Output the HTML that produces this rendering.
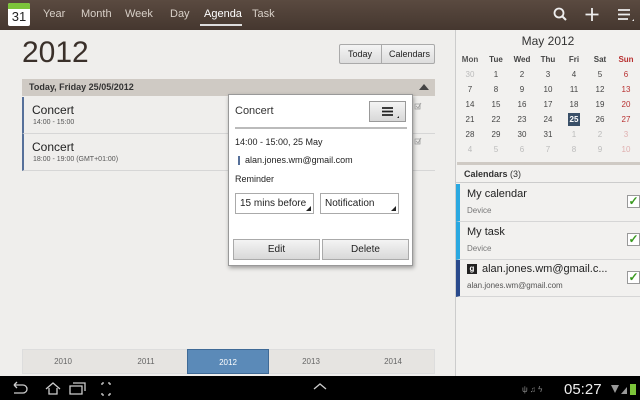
<!DOCTYPE html>
<html><head><style>
*{margin:0;padding:0;box-sizing:border-box}
body{width:640px;height:400px;overflow:hidden;background:#efeeec;font-family:"Liberation Sans",sans-serif;position:relative;color:#222}
.a{position:absolute}
.top{left:0;top:0;width:640px;height:30px;background:linear-gradient(#5a4a40,#45372f)}
.tab{top:8px;font-size:11px;color:#d8d0c8}
.cal td{width:26px;text-align:center;font-size:8px;height:15px;color:#444}
.g{color:#bbb!important}.r{color:#b83030!important}.rg{color:#e0b0b0!important}
.chk{width:13px;height:13px;border:1px solid #999;background:#fff;color:#3a9a20;font-size:12px;line-height:11px;text-align:center;font-weight:bold}
.yr{top:349px;height:25px;width:82px;text-align:center;font-size:8px;color:#666;line-height:25px}
</style></head><body>
<div class="a top"></div>
<div class="a" style="left:8px;top:3px;width:22px;height:23px;background:#fff;border-radius:2px;overflow:hidden"><div style="height:6px;background:#7cc43a"></div><div style="font-size:13px;text-align:center;line-height:16px;color:#222">31</div></div>
<div class="a tab" style="left:43px">Year</div>
<div class="a tab" style="left:81px">Month</div>
<div class="a tab" style="left:125px">Week</div>
<div class="a tab" style="left:170px">Day</div>
<div class="a tab" style="left:204px;color:#fff">Agenda</div>
<div class="a" style="left:200px;top:24px;width:42px;height:2px;background:#ddd"></div>
<div class="a tab" style="left:252px">Task</div>
<svg class="a" style="left:552px;top:6px" width="84" height="18" viewBox="0 0 84 18"><circle cx="7" cy="7" r="4.5" fill="none" stroke="#eee" stroke-width="1.8"/><path d="M10 10l4 4" stroke="#eee" stroke-width="2"/><path d="M40 2v13M33.5 8.5h13" stroke="#eee" stroke-width="1.8"/><path d="M66 4h12M66 8.5h12M66 13h10" stroke="#eee" stroke-width="1.8"/><path d="M80 15l2-2v2z" fill="#eee"/></svg>

<div class="a" style="left:22px;top:36px;font-size:30px;color:#3a302a">2012</div>
<div class="a" style="left:339px;top:44px;width:96px;height:20px;border:1px solid #aaa;border-radius:2px;background:linear-gradient(#f4f4f4,#ddd);font-size:9px;line-height:18px"><span style="position:absolute;left:8px">Today</span><span style="position:absolute;left:41px;top:0;height:18px;border-left:1px solid #aaa;padding-left:7px">Calendars</span></div>
<div class="a" style="left:22px;top:79px;width:413px;height:17px;background:#cfcac4;font-size:9px;font-weight:bold;line-height:17px;padding-left:7px;color:#333">Today, Friday 25/05/2012</div>
<div class="a" style="left:419px;top:84px;border-left:5px solid transparent;border-right:5px solid transparent;border-bottom:6px solid #444"></div>
<div class="a" style="left:22px;top:97px;width:413px;height:37px;border-left:2px solid #56709a;border-bottom:1px solid #d6d6d6"><div style="position:absolute;left:8px;top:6px;font-size:12px">Concert</div><div style="position:absolute;left:9px;top:22px;font-size:7px;color:#555">14:00 - 15:00</div></div>
<div class="a" style="left:22px;top:134px;width:413px;height:37px;border-left:2px solid #56709a;border-bottom:1px solid #d6d6d6"><div style="position:absolute;left:8px;top:6px;font-size:12px">Concert</div><div style="position:absolute;left:9px;top:22px;font-size:7px;color:#555">18:00 - 19:00 (GMT+01:00)</div></div>

<div class="a" style="left:228px;top:94px;width:185px;height:172px;background:#fff;border:1px solid #999;box-shadow:1px 2px 4px rgba(0,0,0,.35)">
<div class="a" style="left:6px;top:10px;font-size:11px;color:#333">Concert</div>
<div class="a" style="left:140px;top:6px;width:37px;height:21px;border:1px solid #999;background:linear-gradient(#f4f4f4,#d8d8d8)"><svg width="35" height="19"><path d="M12 6h11M12 9.5h11M12 13h11" stroke="#222" stroke-width="1.8"/><path d="M27 16l2-2v2z" fill="#222"/></svg></div>
<div class="a" style="left:6px;top:32px;width:172px;height:2px;background:#bbb"></div>
<div class="a" style="left:6px;top:42px;font-size:9px">14:00 - 15:00, 25 May</div>
<div class="a" style="left:9px;top:61px;width:2px;height:9px;background:#56709a"></div>
<div class="a" style="left:16px;top:60px;font-size:9px">alan.jones.wm@gmail.com</div>
<div class="a" style="left:6px;top:79px;font-size:9px">Reminder</div>
<div class="a" style="left:6px;top:98px;width:79px;height:21px;border:1px solid #aaa;font-size:10px;line-height:19px;padding-left:4px">15 mins before<span style="position:absolute;right:2px;bottom:2px;border-left:5px solid transparent;border-bottom:5px solid #222"></span></div>
<div class="a" style="left:91px;top:98px;width:79px;height:21px;border:1px solid #aaa;font-size:10px;line-height:19px;padding-left:4px">Notification<span style="position:absolute;right:2px;bottom:2px;border-left:5px solid transparent;border-bottom:5px solid #222"></span></div>
<div class="a" style="left:4px;top:144px;width:87px;height:21px;border:1px solid #aaa;background:linear-gradient(#f4f4f4,#d8d8d8);font-size:10px;text-align:center;line-height:19px">Edit</div>
<div class="a" style="left:93px;top:144px;width:87px;height:21px;border:1px solid #aaa;background:linear-gradient(#f4f4f4,#d8d8d8);font-size:10px;text-align:center;line-height:19px">Delete</div>
</div>
<svg class="a" style="left:413px;top:101px" width="10" height="50"><path d="M2 3h5v5h-5zM3 5l2 2 3-5M2 38h5v5h-5zM3 40l2 2 3-5" fill="none" stroke="#999" stroke-width="0.8"/></svg>

<div class="a" style="left:22px;top:349px;width:413px;height:25px;background:#e6e4e1;border:1px solid #ddd"></div>
<div class="a yr" style="left:22px">2010</div>
<div class="a yr" style="left:105px">2011</div>
<div class="a yr" style="left:187px;background:#5b8ab8;color:#fff;border:1px solid #3f6a96">2012</div>
<div class="a yr" style="left:270px">2013</div>
<div class="a yr" style="left:352px">2014</div>

<div class="a" style="left:455px;top:30px;width:1px;height:346px;background:#ccc"></div>
<div class="a" style="left:456px;top:30px;width:184px;height:346px;background:#f2f1ef"></div>
<div class="a" style="left:456px;top:34px;width:184px;text-align:center;font-size:12px;color:#333">May 2012</div>
<table class="a cal" style="left:457px;top:52px;border-collapse:collapse">
<tr style="font-weight:bold"><td style="color:#555">Mon</td><td>Tue</td><td>Wed</td><td>Thu</td><td>Fri</td><td>Sat</td><td class="r">Sun</td></tr>
<tr><td class="g">30</td><td>1</td><td>2</td><td>3</td><td>4</td><td>5</td><td class="r">6</td></tr>
<tr><td>7</td><td>8</td><td>9</td><td>10</td><td>11</td><td>12</td><td class="r">13</td></tr>
<tr><td>14</td><td>15</td><td>16</td><td>17</td><td>18</td><td>19</td><td class="r">20</td></tr>
<tr><td>21</td><td>22</td><td>23</td><td>24</td><td><span style="background:#3a5068;color:#fff;padding:2px 2px;font-weight:bold">25</span></td><td>26</td><td class="r">27</td></tr>
<tr><td>28</td><td>29</td><td>30</td><td>31</td><td class="g">1</td><td class="g">2</td><td class="rg">3</td></tr>
<tr><td class="g">4</td><td class="g">5</td><td class="g">6</td><td class="g">7</td><td class="g">8</td><td class="g">9</td><td class="rg">10</td></tr>
</table>
<div class="a" style="left:457px;top:162px;width:183px;height:3px;background:#cfcac4"></div>
<div class="a" style="left:456px;top:165px;width:184px;height:18px;font-size:9px;font-weight:bold;line-height:18px;padding-left:8px;color:#333;border-bottom:1px solid #ccc">Calendars <span style="font-weight:normal">(3)</span></div>
<div class="a" style="left:456px;top:184px;width:184px;height:38px;border-left:4px solid #2aa8e0;border-bottom:1px solid #d6d6d6"><div class="a" style="left:7px;top:4px;font-size:11px">My calendar</div><div class="a" style="left:7px;top:22px;font-size:8px;color:#777">Device</div><div class="a chk" style="left:167px;top:11px">✓</div></div>
<div class="a" style="left:456px;top:222px;width:184px;height:38px;border-left:4px solid #2aa8e0;border-bottom:1px solid #d6d6d6"><div class="a" style="left:7px;top:4px;font-size:11px">My task</div><div class="a" style="left:7px;top:22px;font-size:8px;color:#777">Device</div><div class="a chk" style="left:167px;top:11px">✓</div></div>
<div class="a" style="left:456px;top:260px;width:184px;height:37px;border-left:4px solid #2a4a8c;border-bottom:1px solid #d6d6d6"><div class="a" style="left:7px;top:4px;width:10px;height:10px;background:#222;color:#fff;font-size:8px;text-align:center;line-height:10px;font-weight:bold">g</div><div class="a" style="left:22px;top:3px;font-size:11px">alan.jones.wm@gmail.c...</div><div class="a" style="left:7px;top:21px;font-size:8px;color:#555">alan.jones.wm@gmail.com</div><div class="a chk" style="left:167px;top:11px">✓</div></div>

<div class="a" style="left:0;top:376px;width:640px;height:24px;background:#000"></div>
<svg class="a" style="left:0;top:376px" width="640" height="24"><g fill="none" stroke="#ccc" stroke-width="1.3"><path d="M14 9h9a4 4 0 010 8h-9M14 9l3-3M14 9l3 3"/><path d="M46 13l7-6 7 6M49 12v6h8v-6"/><path d="M70 10h12v8h-12zM73 7h12v8"/><path d="M102 7h2M102 7v2M110 7h-2M110 7v2M102 19h2M102 19v-2M110 19h-2M110 19v-2"/><path d="M314 13l6-5 6 5"/></g><text x="564" y="18" fill="#eee" font-size="15" font-family="Liberation Sans">05:27</text><text x="522" y="16" fill="#888" font-size="8" font-family="Liberation Sans">ψ ♫ ϟ</text><path d="M611 9l8 0-4 8z" fill="#999"/><path d="M621 18l6-7v7z" fill="#999"/><rect x="630" y="8" width="6" height="11" fill="#7cc43a"/></svg>
</body></html>
